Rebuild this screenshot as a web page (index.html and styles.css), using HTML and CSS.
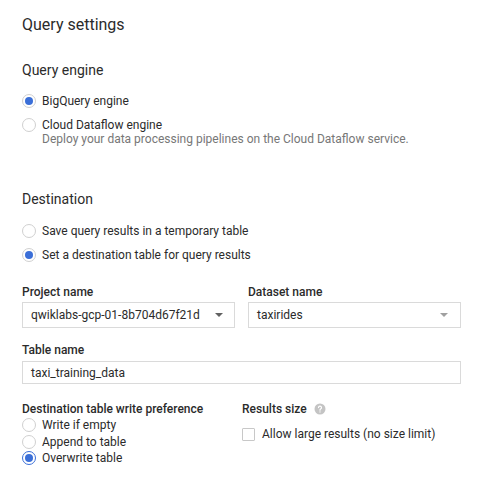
FILE: index.html
```html
<!DOCTYPE html>
<html>
<head>
<meta charset="utf-8">
<link rel="stylesheet" href="styles.css">
</head>
<body>
<div class="page">
  <h1 class="title">Query settings</h1>

  <h2 class="section">Query engine</h2>
  <div class="radio-group">
    <div class="radio-row">
      <span class="radio checked-soft"></span>
      <span class="radio-label">BigQuery engine</span>
    </div>
    <div class="radio-row top">
      <span class="radio"></span>
      <div class="radio-text">
        <span class="radio-label">Cloud Dataflow engine</span>
        <span class="hint">Deploy your data processing pipelines on the Cloud Dataflow service.</span>
      </div>
    </div>
  </div>

  <h2 class="section dest">Destination</h2>
  <div class="radio-group dest-group">
    <div class="radio-row">
      <span class="radio"></span>
      <span class="radio-label">Save query results in a temporary table</span>
    </div>
    <div class="radio-row">
      <span class="radio checked-soft"></span>
      <span class="radio-label">Set a destination table for query results</span>
    </div>
  </div>

  <div class="fields">
    <div class="field">
      <label class="field-label">Project name</label>
      <div class="select">
        <span>qwiklabs-gcp-01-8b704d67f21d</span>
        <span class="caret"></span>
      </div>
    </div>
    <div class="field">
      <label class="field-label">Dataset name</label>
      <div class="select">
        <span>taxirides</span>
        <span class="caret light"></span>
      </div>
    </div>
    <div class="field wide">
      <label class="field-label">Table name</label>
      <div class="input">taxi_training_data</div>
    </div>
  </div>

  <div class="bottom">
    <div class="col">
      <div class="field-label">Destination table write preference</div>
      <div class="tight-radios">
        <div class="radio-row small">
          <span class="radio"></span>
          <span class="radio-label">Write if empty</span>
        </div>
        <div class="radio-row small">
          <span class="radio"></span>
          <span class="radio-label">Append to table</span>
        </div>
        <div class="radio-row small">
          <span class="radio checked"></span>
          <span class="radio-label">Overwrite table</span>
        </div>
      </div>
    </div>
    <div class="col">
      <div class="field-label help-row">Results size
        <svg class="help" viewBox="0 0 24 24" width="12" height="12"><circle cx="12" cy="12" r="11" fill="#c4c4c4"/><path d="M9 9.2a3 3 0 1 1 4.2 2.7c-.8.4-1.2 1-1.2 1.9v.6" fill="none" stroke="#fff" stroke-width="2.4" stroke-linecap="round"/><circle cx="12" cy="17.8" r="1.4" fill="#fff"/></svg>
      </div>
      <div class="check-row">
        <span class="checkbox"></span>
        <span class="radio-label">Allow large results (no size limit)</span>
      </div>
    </div>
  </div>
</div>
</body>
</html>
```

FILE: styles.css
```css
* { box-sizing: border-box; }
html, body { margin: 0; padding: 0; background: #fff; }
body {
  font-family: Roboto, "Liberation Sans", Arial, sans-serif;
  color: #2b2b2b;
}
.page { padding: 15px 30px 0 22px; }
.title {
  margin: 0;
  font-size: 16px;
  font-weight: 400;
  line-height: 20px;
  color: #2b2b2b;
}
.section {
  margin: 25px 0 0;
  font-size: 14px;
  font-weight: 400;
  line-height: 20px;
  color: #2b2b2b;
}
.section.dest { margin-top: 43px; }
.radio-group {
  margin-top: 13px;
  display: flex;
  flex-direction: column;
  gap: 8px;
}
.radio-group.dest-group { margin-top: 14px; }
.radio-row {
  display: flex;
  align-items: center;
  gap: 6px;
  height: 16px;
}
.radio-row.top { align-items: flex-start; height: auto; }
.radio-row.top .radio { margin-top: 1px; }
.radio-text { display: flex; flex-direction: column; }
.radio-label { font-size: 12px; line-height: 16px; color: #2b2b2b; }
.hint { font-size: 12px; line-height: 13px; color: #777; }
.radio {
  width: 14px; height: 14px;
  border-radius: 50%;
  border: 1px solid #d0d0d0;
  flex: none;
  position: relative;
  background: #fff;
}
.radio.checked-soft::after, .radio.checked::after {
  content: "";
  position: absolute;
  left: 2px; top: 2px;
  width: 8px; height: 8px;
  border-radius: 50%;
  background: #3b6fd8;
}
.radio.checked { border: 1.5px solid #3b6fd8; }
.radio.checked::after { left: 1.5px; top: 1.5px; }
.fields {
  margin-top: 21px;
  display: grid;
  grid-template-columns: 213px 213px;
  column-gap: 13px;
  row-gap: 14px;
}
.field.wide { grid-column: 1 / 3; }
.field-label {
  display: block;
  font-size: 12px;
  font-weight: 500;
  line-height: 16px;
  color: #2b2b2b;
}
.select, .input {
  margin-top: 2px;
  height: 26px;
  border: 1px solid #dadada;
  display: flex;
  align-items: center;
  justify-content: space-between;
  padding: 0 9px 0 8px;
  font-size: 12px;
  color: #2b2b2b;
}
.input { height: 23px; margin-top: 3px; }
.caret {
  width: 0; height: 0;
  border-left: 4px solid transparent;
  border-right: 4px solid transparent;
  border-top: 4px solid #616161;
  margin-right: 2px;
}
.caret.light { border-top-color: #a0a0a0; margin-right: 3px; }
.bottom {
  margin-top: 17px;
  display: grid;
  grid-template-columns: 220px 220px;
}
.tight-radios { display: flex; flex-direction: column; gap: 0; }
.radio-row.small { height: 16.5px; }
.help-row { display: flex; align-items: center; gap: 7px; }
.help { display: block; }
.check-row {
  margin-top: 9px;
  display: flex;
  align-items: center;
  gap: 7px;
}
.checkbox {
  width: 13px; height: 13px;
  border: 1px solid #c8c8c8;
  border-radius: 1px;
  flex: none;
}
```
